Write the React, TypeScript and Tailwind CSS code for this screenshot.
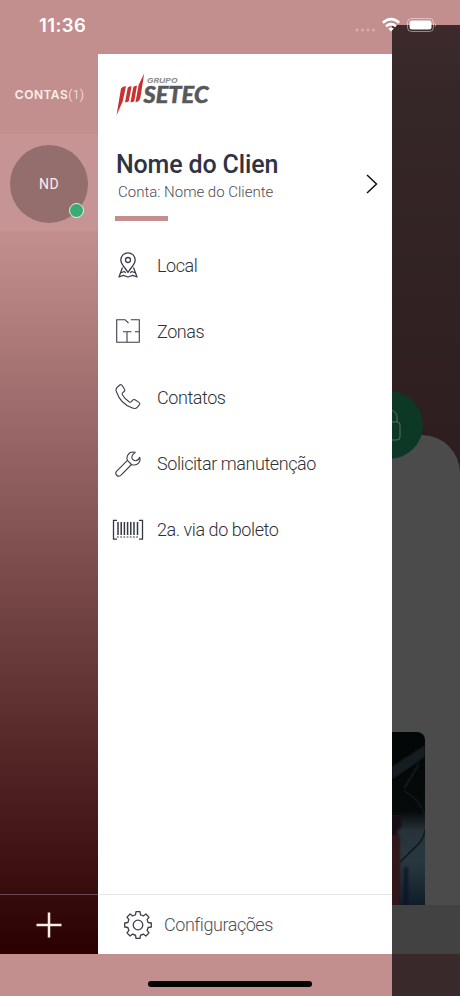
import type { ReactNode } from 'react';

function LocalIcon() {
  return (
    <svg width="20" height="26" viewBox="0 0 20 26" fill="none" stroke="#3b3f4a" strokeWidth="1.3" strokeLinejoin="round" strokeLinecap="round">
      <path d="M10 20.5C7.500 16 2.800 12.500 2.800 8a7.200 7.200 0 0 1 14.400 0c0 4.500-4.700 8-7.200 12.500z" />
      <circle cx="10" cy="8" r="2.500" />
      <path d="M4.300 16 1 25l4.300-1.600L10 25l4.700-1.600L19 25l-3.300-9M3.800 20.500l2.200-1 1.500 1M16.200 20.500l-2.200-1-1.500 1" />
    </svg>
  );
}

function ZonesIcon() {
  return (
    <svg width="24" height="24" viewBox="0 0 24 24" fill="none" stroke="#3b3f4a" strokeWidth="1.1">
      <path d="M12.500 4 9 .7H.7v22.600h22.600V.7h-8.500M7 12.800h8.500M11 12.800v10.500M19 12.800h4.300" />
    </svg>
  );
}

function PhoneIcon() {
  return (
    <svg width="26" height="26" viewBox="0 0 26 26" fill="none" stroke="#3b3f4a" strokeWidth="1.1" strokeLinejoin="round">
      <path d="M2.500 3 4.800 1c.8-.6 1.800-.4 2.400.5l2.300 3.700c.5.9.3 1.700-.4 2.300L7.600 8.800c-.6.6-.6 1.300-.2 2 1.600 3 3.900 5.400 7 7.200.8.400 1.500.3 2-.3l1.300-1.600c.6-.7 1.500-.8 2.300-.3l4 2.600c.9.600 1 1.500.4 2.300l-2 2.400c-1.200 1.400-3 1.700-5 1C9.800 21.500 4 15.300 1.300 7.500.7 5.800 1.100 4.200 2.500 3z" />
    </svg>
  );
}

function WrenchIcon() {
  return (
    <svg width="26" height="26" viewBox="0 0 26 26" fill="none" stroke="#3b3f4a" strokeWidth="1.100" strokeLinejoin="round">
      <path d="M20.200 1.400c-2.900-.8-6 .2-7.500 2.800-.9 1.700-.9 3.500-.3 5.200L1.700 20.200a2.900 2.900 0 0 0 4.100 4.100L16.500 13.500c2.600 1 5.500.4 7.300-1.700 1.300-1.500 1.500-3.600.9-5.500-1 2.300-2.500 3.700-4.300 3.500-2.300-.2-3.900-2-3.500-4.300.3-1.800 1.600-3.200 3.300-4.100z" />
      <path d="m12.400 9.400 4.100 4.100" />
    </svg>
  );
}

function BarcodeIcon() {
  return (
    <svg width="32" height="22" viewBox="0 0 32 22" fill="none" stroke="#343842">
      <path d="M5 1.300H1.500V6M27 1.300h3.500V6M5 20.200H1.500v-4.700M27 20.200h3.500v-4.700M1.500 5v11M30.500 5v11" strokeWidth="1.300" />
      <path d="M6 3v13M9.200 3v13M12.400 3v13M15.600 3v13M18.800 3v13M22 3v13M25.500 3v13" strokeWidth="1.500" />
      <path d="M5 18h22" strokeWidth="1.100" strokeDasharray="1.800 1.400" />
    </svg>
  );
}

function GearIcon() {
  return (
    <svg width="28" height="28" viewBox="0 0 28 28" fill="none" stroke="#3b3f4a" strokeWidth="1.300" strokeLinejoin="round">
      <circle cx="14" cy="14" r="4.800" />
      <path d="M12 .7h4l.5 3.200q1.500.3 2.800 1l2.600-1.900 3.100 3.100-1.900 2.600q.7 1.300 1 2.800l3.200.5v4l-3.200.5q-.3 1.500-1 2.800l1.900 2.600-3.100 3.100-2.600-1.900q-1.300.7-2.800 1l-.5 3.200h-4l-.5-3.200q-1.500-.3-2.800-1L6.100 25 3 21.900l1.900-2.600q-.7-1.300-1-2.800L.7 16v-4l3.200-.5q.3-1.500 1-2.800L3 6.100 6.100 3l2.600 1.900q1.300-.7 2.800-1z" />
    </svg>
  );
}

function Logo() {
  return (
    <svg width="98" height="48" viewBox="0 0 98 48">
      <g fill="#c9302f">
        <path d="M7 18.500q2-2.500 5-2.300L8.800 31 2.500 45.500z" />
        <path d="M13.800 17.500q1.800-1.500 3.800-1.300L14.800 31q-1.500 1.500-3.800 1.200z" />
        <path d="M19.300 17q1.800-1.500 3.700-1.300L20.300 31q-1.500 1.500-3.800 1.200z" />
        <path d="M24.600 15 30.200 3.500 26.500 27q-.8 4.800-5 5.200z" />
      </g>
      <text x="33" y="12.600" textLength="30.500" lengthAdjust="spacingAndGlyphs" fontFamily="Inter, sans-serif" fontSize="6.700" fontWeight="700" fontStyle="italic" fill="#8b8c90">GRUPO</text>
      <text x="29.500" y="32.700" textLength="65" lengthAdjust="spacingAndGlyphs" fontFamily="Lato, sans-serif" fontSize="22.500" fontWeight="900" fontStyle="italic" fill="#57585c" stroke="#57585c" strokeWidth=".5">SETEC</text>
    </svg>
  );
}

function MenuItem({ icon, children }: { icon: ReactNode; children: ReactNode }) {
  return (
    <li className="flex h-[66.200px] items-center">
      <span className="flex w-[59px] justify-center">{icon}</span>
      <span className="whitespace-nowrap">{children}</span>
    </li>
  );
}

function Accounts() {
  return (
    <aside className="flex w-[98px] flex-col bg-[linear-gradient(180deg,#c38e8e_0px,#c38e8e_178px,#2a0000_900px)] text-[#fbeee8]">
      <div className="flex h-20 items-center justify-center pt-px pl-px font-['Inter'] text-[12px] tracking-[.5px]">
        <b className="font-semibold">CONTAS</b>
        <span className="font-['Roboto'] text-[13px] font-light tracking-[.1px]">(1)</span>
      </div>
      <div className="flex h-[97px] items-center justify-center bg-white/[.06]">
        <div className="relative mt-[3px] flex size-[78px] items-center justify-center rounded-full bg-[#946d6d] text-[14px] tracking-[.4px]">
          ND
          <i className="absolute right-[4px] bottom-[5px] size-[15px] rounded-full border-[1.500px] border-[#eaf5e8] bg-[#3caa74]" />
        </div>
      </div>
      <div className="mt-auto flex h-[60px] items-center justify-center border-t border-white/25">
        <svg width="26" height="26" viewBox="0 0 26 26" stroke="#fbeee8" strokeWidth="2.500"><path d="M13 .5v25M.5 13h25" /></svg>
      </div>
    </aside>
  );
}

function Menu() {
  return (
    <main className="flex w-[294px] flex-col bg-white text-[#2f3136]">
      <div className="h-[95px] pt-4 pl-4"><Logo /></div>
      <div className="flex h-[67px] items-start justify-between pl-[18px]">
        <div>
          <h1 className="text-[25px] leading-[32px] font-medium tracking-[-.15px] whitespace-nowrap text-[#303342]">Nome do Clien</h1>
          <p className="-mt-px pl-[2px] text-[15px] leading-[24px] font-light whitespace-nowrap text-[#4b4d54]">Conta: Nome do Cliente</p>
        </div>
        <svg className="mt-[25px] mr-[14px]" width="12" height="20" viewBox="0 0 12 20" fill="none" stroke="#111" strokeWidth="1.500"><path d="m1 1 9.500 9L1 19" /></svg>
      </div>
      <div className="ml-[17px] h-[5px] w-[53px] bg-[#c38e8e]" />
      <ul className="mt-[11px] text-[18px] font-light tracking-[-.43px]">
        <MenuItem icon={<LocalIcon />}>Local</MenuItem>
        <MenuItem icon={<ZonesIcon />}>Zonas</MenuItem>
        <MenuItem icon={<PhoneIcon />}>Contatos</MenuItem>
        <MenuItem icon={<WrenchIcon />}>Solicitar manutenção</MenuItem>
        <MenuItem icon={<BarcodeIcon />}>2a. via do boleto</MenuItem>
      </ul>
      <div className="mt-auto flex h-[60px] items-center gap-3 border-t border-[#e8e5e5] pl-[26px] text-[18px] font-light tracking-[-.45px] text-[#4d5058]">
        <GearIcon />
        <span>Configurações</span>
      </div>
    </main>
  );
}

function DimmedHome() {
  return (
    <div className="mt-[25px] flex w-[68px] flex-col overflow-hidden bg-[linear-gradient(180deg,#3d2b2c_0px,#352627_70px,#2e1e1f_410px)]">
      <div className="relative mt-[410px] h-[470px] rounded-tr-[38px] bg-[#4b4b4b]">
        <div className="absolute -top-[44px] -left-[37px] flex size-[68px] items-center justify-center rounded-full bg-[#0d3825]">
          <svg className="ml-[2px]" width="22" height="32" viewBox="0 0 22 32" fill="none" stroke="#53705f" strokeWidth="1"><rect x="1" y="13" width="20" height="18" rx="3" /><path d="M4 13V8a7 7 0 0 1 14 0v5" /></svg>
        </div>
        <svg className="mt-[297px] rounded-tr-[8px]" width="33" height="173" viewBox="0 0 33 174" preserveAspectRatio="none">
          <defs>
            <linearGradient id="photo" x1="0" y1="0" x2="0" y2="1"><stop offset="0" stopColor="#030606" /><stop offset=".46" stopColor="#070a0b" /><stop offset=".57" stopColor="#273239" /><stop offset=".75" stopColor="#293840" /><stop offset="1" stopColor="#101d29" /></linearGradient>
            <filter id="soft"><feGaussianBlur stdDeviation="1.300" /></filter>
          </defs>
          <rect width="33" height="174" fill="url(#photo)" />
          <g filter="url(#soft)">
            <path d="M0 35 33 13v12L0 48z" fill="#161e20" />
            <path d="M12 57l15-25" stroke="#151c1f" strokeWidth="2" fill="none" />
            <path d="M-3 84h12v12q-5 2-3 8v73h-9z" fill="#160f13" />
            <path d="M-3 104h11v73H-3z" fill="#32151c" />
            <path d="M14 136v40" stroke="#0d1922" strokeWidth="3" />
          </g>
          <path d="M8 131 27 112q5-5 6-14M12 59q17 10 21 25" stroke="#11181b" strokeWidth="1.500" fill="none" />
        </svg>
      </div>
      <div className="h-[49px] bg-[#424242]" />
      <div className="flex-1 bg-[#3a292a]" />
    </div>
  );
}

function StatusIcons() {
  return (
    <svg className="absolute top-[16px] left-[354px]" width="84" height="18" viewBox="0 0 84 18" fill="none">
      <g fill="#fff" opacity=".3"><circle cx="3" cy="14" r="1.500" /><circle cx="8.500" cy="14" r="1.500" /><circle cx="14" cy="14" r="1.500" /><circle cx="19.500" cy="14" r="1.500" /></g>
      <path d="M28.800 6.700q8.200-7.200 16.400 0M32 10.200q5-4.200 10 0" stroke="#fff" strokeWidth="2.500" />
      <path d="M34.200 12.500q2.800-2 5.600 0L37 15.500z" fill="#fff" />
      <rect x="53.500" y="2.500" width="26" height="13" rx="4" stroke="#fff" strokeOpacity=".45" />
      <rect x="55.500" y="4.500" width="22" height="9" rx="2.500" fill="#fff" />
      <path d="M81 7q2 2 0 4z" fill="#fff" opacity=".5" />
    </svg>
  );
}

export default function App() {
  return (
    <div className="relative flex h-[996px] w-[460px] overflow-hidden bg-[#c38e8e] font-['Roboto',sans-serif]">
      <div className="flex w-[392px] flex-col">
        <header className="h-[54px] pt-[13px] pl-[39px] font-['Inter'] text-[18.500px] leading-6 font-semibold tracking-[.4px] text-white">11:36</header>
        <div className="flex h-[900px]">
          <Accounts />
          <Menu />
        </div>
      </div>
      <DimmedHome />
      <StatusIcons />
      <div className="absolute bottom-[9px] left-[148px] h-[6px] w-[164px] rounded-full bg-black" />
    </div>
  );
}
